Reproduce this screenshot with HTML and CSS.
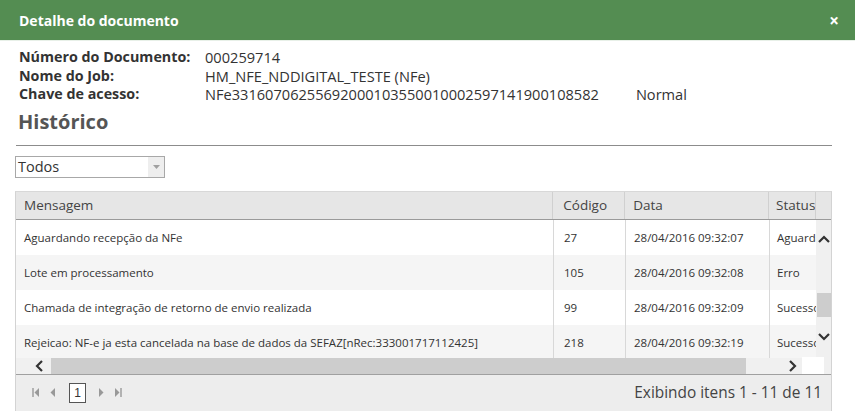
FILE: index.html
```html
<!DOCTYPE html>
<html lang="pt">
<head>
<meta charset="utf-8">
<title>Detalhe do documento</title>
<link rel="stylesheet" href="styles.css">
</head>
<body>
<div class="window">
  <div class="titlebar">
    <span class="title">Detalhe do documento</span>
    <span class="close">×</span>
  </div>
  <div class="content">
    <div class="info">
      <span class="label">Número do Documento:</span><span class="value">000259714</span>
      <span class="label">Nome do Job:</span><span class="value">HM_NFE_NDDIGITAL_TESTE (NFe)</span>
      <span class="label">Chave de acesso:</span><span class="value">NFe33160706255692000103550010002597141900108582<span class="mode">Normal</span></span>
    </div>
    <h2 class="section">Histórico</h2>
    <div class="rule"></div>
    <div class="select">
      <span class="select-text">Todos</span>
      <span class="select-arrow"><svg width="7" height="4" viewBox="0 0 7 4"><path d="M0 0h7L3.5 4z" fill="#a0a0a0"/></svg></span>
    </div>
    <div class="grid">
      <div class="grid-head">
        <div class="cell c-msg">Mensagem</div>
        <div class="cell c-cod">Código</div>
        <div class="cell c-data">Data</div>
        <div class="cell c-status">Status</div>
        <div class="cell c-sb"></div>
      </div>
      <div class="grid-body">
        <div class="rows">
          <div class="row">
            <div class="cell c-msg">Aguardando recepção da NFe</div>
            <div class="cell c-cod">27</div>
            <div class="cell c-data">28/04/2016 09:32:07</div>
            <div class="cell c-status">Aguardando</div>
          </div>
          <div class="row alt">
            <div class="cell c-msg">Lote em processamento</div>
            <div class="cell c-cod">105</div>
            <div class="cell c-data">28/04/2016 09:32:08</div>
            <div class="cell c-status">Erro</div>
          </div>
          <div class="row">
            <div class="cell c-msg">Chamada de integração de retorno de envio realizada</div>
            <div class="cell c-cod">99</div>
            <div class="cell c-data">28/04/2016 09:32:09</div>
            <div class="cell c-status">Sucesso</div>
          </div>
          <div class="row alt">
            <div class="cell c-msg">Rejeicao: NF-e ja esta cancelada na base de dados da SEFAZ[nRec:333001717112425]</div>
            <div class="cell c-cod">218</div>
            <div class="cell c-data">28/04/2016 09:32:19</div>
            <div class="cell c-status">Sucesso</div>
          </div>
        </div>
        <div class="vscroll">
          <svg class="arrow up" width="12" height="8" viewBox="0 0 12 8"><path d="M1 7L6 2l5 5" fill="none" stroke="#333" stroke-width="2.2"/></svg>
          <div class="vthumb"></div>
          <svg class="arrow down" width="12" height="8" viewBox="0 0 12 8"><path d="M1 1l5 5 5-5" fill="none" stroke="#333" stroke-width="2.2"/></svg>
        </div>
      </div>
      <div class="hscroll">
        <svg class="harrow left" width="8" height="12" viewBox="0 0 8 12"><path d="M7 1L2 6l5 5" fill="none" stroke="#333" stroke-width="2.2"/></svg>
        <div class="hthumb"></div>
        <div class="hrest"></div>
        <svg class="harrow right" width="8" height="12" viewBox="0 0 8 12"><path d="M1 1l5 5-5 5" fill="none" stroke="#333" stroke-width="2.2"/></svg>
        <div class="hcorner"></div>
      </div>
      <div class="pager">
        <div class="pager-nav">
          <svg width="8" height="9" viewBox="0 0 8 9"><path d="M1 0v9" stroke="#999" stroke-width="1.4"/><path d="M7 0v9L2.5 4.5z" fill="#999"/></svg>
          <svg width="6" height="9" viewBox="0 0 6 9"><path d="M5 0v9L0.5 4.5z" fill="#999"/></svg>
          <span class="page">1</span>
          <svg width="6" height="9" viewBox="0 0 6 9"><path d="M1 0v9l4.5-4.5z" fill="#999"/></svg>
          <svg width="8" height="9" viewBox="0 0 8 9"><path d="M1 0v9l4.5-4.5z" fill="#999"/><path d="M7 0v9" stroke="#999" stroke-width="1.4"/></svg>
        </div>
        <div class="pager-info">Exibindo itens 1 - 11 de 11</div>
      </div>
    </div>
  </div>
</div>
</body>
</html>
```
FILE: styles.css
```css
* { box-sizing: border-box; }
html, body { margin: 0; padding: 0; background: #fff; }
body { font-family: "Open Sans", "Noto Sans", sans-serif; color: #333; width: 855px; height: 411px; overflow: hidden; }

.titlebar {
  height: 41px;
  background: #548d52;
  border-bottom: 1px solid #e8f0e8;
  display: flex;
  align-items: center;
  justify-content: space-between;
  padding: 0 16px 0 19px;
  color: #fff;
}
.title { font-size: 14px; font-weight: 700; }
.close { font-size: 17px; font-weight: 700; line-height: 1; }

.content { padding: 7px 23px 0 15px; }

.info {
  display: grid;
  grid-template-columns: 186px auto;
  padding-left: 4px;
  font-size: 14.6px;
  line-height: 18.5px;
  color: #333;
}
.label { font-weight: 700; font-size: 14.3px; }
.mode { margin-left: 37px; }

.section {
  margin: 6px 0 0 3px;
  font-size: 20px;
  font-weight: 700;
  color: #555;
  line-height: 24px;
}
.rule { height: 1px; background: #8c8c8c; margin: 11px 0 0 1px; }

.select {
  margin-top: 10px;
  width: 150px;
  height: 22px;
  border: 1px solid #a8a8a8;
  display: flex;
  align-items: center;
  justify-content: space-between;
}
.select-text { font-size: 14.5px; color: #333; padding-left: 2px; line-height: 20px; }
.select-arrow {
  width: 16px;
  height: 20px;
  background: #eeeeee;
  display: flex;
  align-items: center;
  justify-content: center;
}

.grid {
  margin-top: 13px;
  border: 1px solid #d3d3d3;
  border-bottom: none;
  border-top-color: #d8d8d8;
  font-size: 11.5px;
}
.grid-head {
  display: flex;
  height: 28px;
  background: #e6e6e6;
  border-bottom: 1px solid #9a9a9a;
  font-size: 13.5px;
  color: #444;
}
.grid-head .cell { display: flex; align-items: center; border-left: 1px solid #d0d0d0; }
.grid-head .c-msg { border-left: none; }
.cell { white-space: nowrap; overflow: hidden; padding-left: 8px; }
.c-msg { width: 537px; }
.c-cod { width: 72px; padding-left: 10px; }
.c-data { width: 144px; }
.c-status { width: 47px; padding-left: 7px; }
.c-sb { width: 16px; padding: 0; }

.grid-body { display: flex; height: 138px; overflow: hidden; }
.rows { width: 800px; }
.row { display: flex; height: 35px; align-items: center; background: #fff; color: #333; }
.row.alt { background: #f5f5f5; }
.row .cell { height: 35px; display: flex; align-items: center; }
.row .c-cod, .row .c-data, .row .c-status { border-left: 1px solid #d8d8d8; }

.vscroll {
  width: 16px;
  background: #f0f0f0;
  display: flex;
  flex-direction: column;
  align-items: center;
}
.vscroll .arrow { flex: none; }
.vscroll .up { margin-top: 15px; }
.vthumb { flex: none; height: 24px; width: 15px; margin: 50px 0 0 1px; background: #cdcdcd; }
.vscroll .down { margin-top: 16px; }

.hscroll {
  height: 17px;
  display: flex;
  align-items: center;
  background: #f0f0f0;
  border-bottom: 1px solid #a0a0a0;
}
.harrow { flex: none; }
.harrow.left { margin: 0 0 0 19px; }
.hthumb { width: 695px; height: 16px; background: #cdcdcd; margin-left: 8px; }
.hrest { width: 43px; }
.hcorner { width: 22px; height: 17px; background: #fff; margin-left: 5px; }

.pager {
  height: 36px;
  background: #ededed;
  display: flex;
  align-items: center;
  justify-content: space-between;
  padding: 0 9px 0 16px;
}
.pager-nav { display: flex; align-items: center; }
.pager-nav svg { margin-right: 10px; }
.page {
  width: 17px;
  height: 20px;
  border: 1px solid #555;
  background: #fff;
  font-size: 12px;
  font-family: "Liberation Sans", sans-serif;
  display: flex;
  align-items: center;
  justify-content: center;
  margin: 0 12px 0 3px;
  color: #333;
}
.pager-info { font-size: 15.4px; color: #444; }
```
